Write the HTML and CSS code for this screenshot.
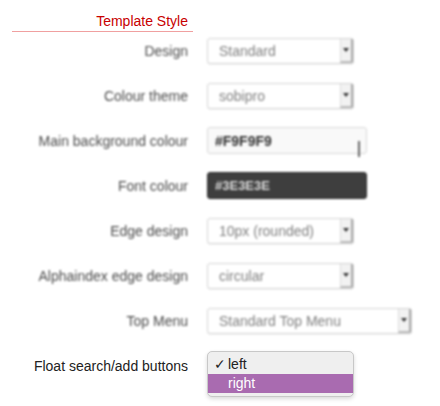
FILE: index.html
```html
<!DOCTYPE html>
<html>
<head>
<meta charset="utf-8">
<link rel="stylesheet" href="styles.css">
</head>
<body>
<div class="page">
  <div class="heading"><span>Template Style</span></div>
  <div class="rows">
    <div class="row blur">
      <div class="label">Design</div>
      <div class="select w147"><span class="val">Standard</span><span class="arrow"><i></i></span></div>
    </div>
    <div class="row blur">
      <div class="label">Colour theme</div>
      <div class="select w147"><span class="val">sobipro</span><span class="arrow"><i></i></span></div>
    </div>
    <div class="row blur">
      <div class="label">Main background colour</div>
      <div class="input light"><span class="val">#F9F9F9</span><span class="bar"></span></div>
    </div>
    <div class="row blur">
      <div class="label">Font colour</div>
      <div class="input dark"><span class="val">#3E3E3E</span></div>
    </div>
    <div class="row blur">
      <div class="label">Edge design</div>
      <div class="select w147"><span class="val">10px (rounded)</span><span class="arrow"><i></i></span></div>
    </div>
    <div class="row blur">
      <div class="label">Alphaindex edge design</div>
      <div class="select w147"><span class="val">circular</span><span class="arrow"><i></i></span></div>
    </div>
    <div class="row blur">
      <div class="label">Top Menu</div>
      <div class="select w205"><span class="val">Standard Top Menu</span><span class="arrow"><i></i></span></div>
    </div>
    <div class="row sharp">
      <div class="label">Float search/add buttons</div>
      <div class="dropwrap">
        <ul class="dropdown">
          <li class="opt"><span class="check">✓</span>left</li>
          <li class="opt sel"><span class="check"></span>right</li>
        </ul>
      </div>
    </div>
    <div class="row blur next">
      <div class="label red">Some options</div>
    </div>
  </div>
</div>
</body>
</html>
```
FILE: styles.css
```css
* { box-sizing: border-box; }
html, body { margin: 0; padding: 0; background: #fff; }
body { font-family: "Liberation Sans", Arial, sans-serif; font-size: 14px; color: #222; overflow: hidden; }
.page { width: 440px; height: 406px; padding-top: 13px; overflow: hidden; }
.heading {
  margin-left: 12px; width: 181px; text-align: right;
  border-bottom: 1px solid #f0a0a0; padding-right: 5px; height: 19px;
  color: #c80000; font-size: 14px; line-height: 17px;
}
.rows { display: flex; flex-direction: column; margin-top: -4px; }
.row { display: flex; align-items: center; height: 45px; }
.label { width: 188px; text-align: right; flex: none; color: #4a4a4a; padding-top: 1px; }
.row > .select, .row > .input, .row > .dropwrap { margin-left: 19px; }
.blur { filter: blur(1.1px); }
.sharp .label { color: #222; }
.select {
  height: 26px; border: 1px solid #d4d4d4; border-radius: 3px; background: #fff;
  display: flex; align-items: stretch; justify-content: space-between;
  box-shadow: 0 1px 1px rgba(0,0,0,0.05);
}
.w147 { width: 147px; }
.w205 { width: 205px; }
.val { padding-left: 11px; display: flex; align-items: center; color: #808080; }
.arrow {
  width: 13px; border-left: 1px solid #ddd; border-right: 2px solid #aaa; border-bottom: 2px solid #bbb;
  background: #f2f2f2; display: flex; align-items: center; justify-content: center;
}
.arrow i { display: block; width: 0; height: 0; border-left: 3px solid transparent; border-right: 3px solid transparent; border-top: 4px solid #333; }
.input { width: 160px; height: 27px; border: 1px solid #d8d8d8; border-radius: 3px; display: flex; align-items: center; position: relative; }
.input .val { padding-left: 7px; font-weight: bold; }
.light { background: #f9f9f9; }
.light .val { color: #333; }
.dark { background: #3e3e3e; border-color: #2e2e2e; }
.dark .val { color: #ddd; font-weight: bold; font-size: 13px; }
.bar { position: absolute; right: 6px; top: 13px; width: 2px; height: 16px; background: #666; }
.dropwrap { width: 147px; height: 26px; position: relative; }
.dropdown {
  position: absolute; left: 0; top: -2px; width: 147px; margin: 0; padding: 3px 0 3px;
  list-style: none; background: #efefef; border: 1px solid #c8c8c8; border-radius: 5px;
  box-shadow: 0 2px 4px rgba(0,0,0,0.15);
}
.opt { height: 19px; line-height: 19px; display: flex; color: #222; }
.check { width: 20px; padding-left: 6px; }
.sel { background: #a96bb0; color: #fff; }
.next { height: 30px; align-items: flex-end; }
.red { color: #d05050; width: 165px; transform: translateY(12px); }
```
